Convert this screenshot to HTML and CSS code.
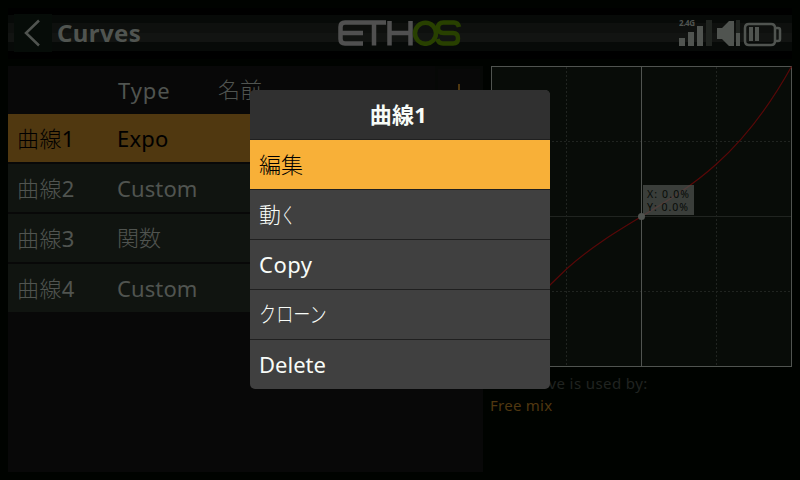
FILE: index.html
```
<!DOCTYPE html>
<html lang="ja">
<head>
<meta charset="utf-8">
<title>Curves</title>
<link rel="stylesheet" href="styles.css">
</head>
<body>
<div class="screen">
  <header class="topbar">
    <div class="back"><svg width="38" height="38" viewBox="0 0 38 38"><path d="M25 6.5 12 19 25 31.5"/></svg></div>
    <h1 class="title">Curves</h1>
    <svg class="logo" width="124" height="26" viewBox="0 0 124 26">
      <g class="logo-gray"><path d="M25 23.500H7Q2.500 23.500 2.500 19V7Q2.500 2.500 7 2.500H48M2.500 13H25M36 2.500V25.500M51.500 1V25.500M72.500 1V25.500M51.500 13H72.500"/></g>
      <g class="logo-green"><circle cx="87.500" cy="13.300" r="10.500"/><path d="M121 7Q120 2.500 116 2.500H105.500Q100 2.500 100 8Q100 13 105.500 13H115Q120 13 120 18.500Q120 23.500 115 23.500H105Q100.500 23.500 99.500 19"/></g>
    </svg>
    <svg class="status" width="104" height="30" viewBox="0 0 104 30">
      <text x="0" y="8" textLength="16">2.4G</text>
      <path class="on" d="M0 20h6v8h-6zM9 14h6v14h-6zM18 8h6v20h-6zM38 10h5L50 3h5v25h-5L43 21h-5zM57 15h4v13h-4zM70 9h4v14h-4zM76 9h4v14h-4z"/>
      <path class="off" d="M27 2h6v26h-6zM57 2h4v13h-4z"/>
      <path class="line" d="M70 6h22q4 0 4 4v13q0 4-4 4h-22q-4 0-4-4v-13q0-4 4-4zM97 10h2q2 0 2 2v9q0 2-2 2h-2"/>
    </svg>
  </header>
  <main class="content">
    <section class="list">
      <div class="row head"><span></span><span class="type">Type</span><span class="cjk">名前</span><span class="add"><svg width="20" height="20" viewBox="0 0 20 20"><path d="M10 0v20M0 10h20"/></svg></span></div>
      <div class="row item selected"><span class="name"><span class="cjk">曲線</span>1</span><span class="expo">Expo</span></div>
      <div class="row item"><span class="name"><span class="cjk">曲線</span>2</span><span class="custom">Custom</span></div>
      <div class="row item"><span class="name"><span class="cjk">曲線</span>3</span><span class="cjk">関数</span></div>
      <div class="row item"><span class="name"><span class="cjk">曲線</span>4</span><span class="custom">Custom</span></div>
    </section>
    <section class="side">
      <svg class="graph" width="302" height="302" viewBox="0 0 302 302">
        <rect class="area" x=".5" y=".5" width="300" height="300"/>
        <path class="dash" d="M75.500 1V300M225.500 1V300M1 75.500H300M1 225.500H300"/>
        <path class="mid" d="M1 150.500H300"/>
        <path class="axis" d="M150.500 1V300"/>
        <path class="curve" d="M.5 300.500C50.500 210.500 100.500 180.500 150.500 150.500S250.500 90.500 300.500 .5"/>
        <circle cx="150.500" cy="150.500" r="3.500"/>
        <rect class="tip" x="152" y="119" width="51" height="30"/>
        <text x="156" y="132" textLength="42">X: 0.0%</text>
        <text x="156" y="145" textLength="41">Y: 0.0%</text>
      </svg>
      <p class="used">This curve is used by:</p>
      <p class="mix">Free mix</p>
    </section>
  </main>
  <div class="menu">
    <div class="menu-title">曲線1</div>
    <div class="option japanese active"><span class="cjk">編集</span></div>
    <div class="option japanese"><span class="cjk">動</span><span class="cjk ku">く</span></div>
    <div class="option copy">Copy</div>
    <div class="option japanese"><span class="cjk kana">クローン</span></div>
    <div class="option">Delete</div>
  </div>
</div>
</body>
</html>
```
FILE: styles.css
```
* { box-sizing: border-box; }
body { margin: 0; background: #000400; }
.screen {
  position: relative;
  width: 800px;
  height: 480px;
  overflow: hidden;
  padding: 0 8px;
  background: #000300;
  color: #505450;
  font: 22px/48px "Noto Sans", "Noto Sans CJK JP", sans-serif;
}
.topbar {
  display: flex;
  height: 66px;
  padding: 14px 0 0 6px;
  background: linear-gradient(#000300 8px, #000 8px 15px, #070a08 15px 23px, #0e100e 23px 33px, #121412 33px 42px, #070a08 42px 51px, #000 51px 59px, #000300 59px);
}
.back { width: 38px; height: 38px; background: #060c08; }
.back svg { display: block; fill: none; stroke: #505450; stroke-width: 2.5; }
.title { margin: -5px 0 0 5px; width: 281px; font-size: 24px; line-height: 48px; letter-spacing: .4px; }
.logo { margin-top: 6px; fill: none; stroke-width: 4.5; }
.logo-gray { stroke: #505050; }
.logo-green { stroke: #284000; }
.status { margin: 4px 0 0 217px; flex: none; }
.status text { font: bold 8px "Noto Sans", sans-serif; fill: #505450; }
.status .on { fill: #505450; }
.status .off { fill: #202420; }
.status .line { fill: none; stroke: #505450; stroke-width: 2.5; }
.content { display: flex; gap: 8px; }
.list { flex: none; width: 475px; height: 406px; background: #080808; }
.side { flex: none; width: 302px; }
.row { display: grid; grid-template-columns: 100px 101px 1fr 48px; height: 48px; padding-left: 9px; }
.item { margin-bottom: 2px; background: #101410; }
.selected { background: #503810; color: #000; }
.cjk { font-family: "Noto Sans CJK JP", sans-serif; font-weight: 300; }
.row > .cjk { line-height: 44px; }
.name { line-height: 46px; letter-spacing: .4px; }
.custom { letter-spacing: .1px; }
.expo { letter-spacing: .2px; }
.type { padding-left: 1px; letter-spacing: .9px; }
.add { display: flex; justify-content: center; padding-top: 15px; border: 3px solid #060806; border-bottom: 0; }
.add path { stroke: #503810; stroke-width: 2; }
.graph { display: block; }
.graph .area { fill: #080c08; stroke: #505450; }
.graph path { fill: none; }
.graph .dash { stroke: #202420; stroke-dasharray: 2 2; }
.graph .mid { stroke: #202420; }
.graph .axis { stroke: #505450; }
.graph .curve { stroke: #580808; stroke-width: 1.2; }
.graph circle { fill: #505450; }
.graph .tip { fill: #505450; fill-opacity: .7; }
.graph text { font-size: 10.5px; fill: #080c08; }
.side p { margin: 0 0 0 -1px; font-size: 15px; line-height: 22px; letter-spacing: .4px; }
.side .used { padding-top: 4px; color: #202420; }
.side .mix { color: #503810; letter-spacing: .25px; }
.menu {
  position: absolute;
  left: 250px;
  top: 90px;
  width: 300px;
  border-radius: 5px;
  overflow: hidden;
  color: #f8fcf8;
  background: #404040;
}
.menu-title { height: 49px; padding-right: 3px; background: #303030; text-align: center; font-weight: bold; letter-spacing: .3px; }
.option { height: 50px; padding-left: 9px; border-top: 1px solid #202020; }
.japanese { line-height: 46px; }
.active { background: #f8b038; color: #000; }
.copy { letter-spacing: .5px; }
.kana, .ku { display: inline-block; transform-origin: left; }
.kana { transform: translateY(-1px) scaleX(.78); }
.ku { transform: scaleX(.65); }
```
